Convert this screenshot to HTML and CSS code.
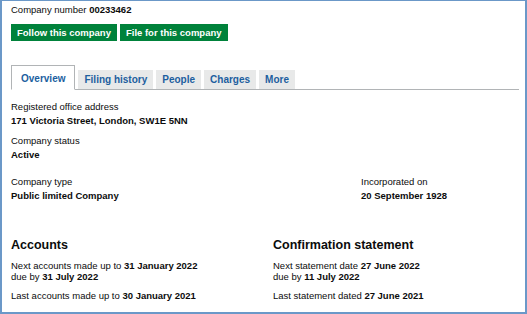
FILE: index.html
```html
<!DOCTYPE html>
<html lang="en">
<head>
  <meta charset="UTF-8">
  <meta name="viewport" content="width=device-width, initial-scale=1.0">
  <title>Company overview</title>
  <link rel="stylesheet" href="styles.css">
</head>
<body>
  <div class="frame">
    <p class="company-number">Company number <strong>00233462</strong></p>

    <div class="actions">
      <a class="button" href="#">Follow this company</a>
      <a class="button" href="#">File for this company</a>
    </div>

    <ul class="tabs">
      <li class="tab selected"><a href="#">Overview</a></li>
      <li class="tab"><a href="#">Filing history</a></li>
      <li class="tab"><a href="#">People</a></li>
      <li class="tab"><a href="#">Charges</a></li>
      <li class="tab"><a href="#">More</a></li>
    </ul>

    <dl class="details">
      <dt>Registered office address</dt>
      <dd>171 Victoria Street, London, SW1E 5NN</dd>
      <dt>Company status</dt>
      <dd>Active</dd>
    </dl>

    <div class="row-third">
      <dl class="details">
        <dt>Company type</dt>
        <dd>Public limited Company</dd>
      </dl>
      <dl class="details">
        <dt>Incorporated on</dt>
        <dd>20 September 1928</dd>
      </dl>
    </div>

    <div class="row-half">
      <div class="panel">
        <h2>Accounts</h2>
        <p>Next accounts made up to <strong>31 January 2022</strong><br>
          due by <strong>31 July 2022</strong></p>
        <p>Last accounts made up to <strong>30 January 2021</strong></p>
      </div>
      <div class="panel">
        <h2>Confirmation statement</h2>
        <p>Next statement date <strong>27 June 2022</strong><br>
          due by <strong>11 July 2022</strong></p>
        <p>Last statement dated <strong>27 June 2021</strong></p>
      </div>
    </div>
  </div>
</body>
</html>
```

FILE: styles.css
```css
body {
  margin: 0;
  background: #ffffff;
  font-family: "Liberation Sans", Arial, sans-serif;
  font-size: 9.5px;
  color: #0b0c0c;
}

.frame {
  box-sizing: border-box;
  height: 314px;
  border: 2px solid #6b98c8;
  border-top-width: 1px;
  padding: 3px 6px 0 9px;
}

.company-number {
  margin: 0;
  line-height: 12px;
}

.actions {
  display: flex;
  gap: 3px;
  margin-top: 8px;
}

.button {
  display: block;
  height: 17px;
  line-height: 17px;
  padding: 0 6px;
  background: #00823b;
  color: #ffffff;
  text-decoration: none;
  font-size: 9.5px;
  font-weight: bold;
}

.tabs {
  display: flex;
  align-items: flex-end;
  gap: 3px;
  list-style: none;
  margin: 24px 0 0;
  padding: 0;
  border-bottom: 1px solid #b1b4b6;
}

.tab a {
  display: block;
  height: 19px;
  line-height: 19px;
  padding: 0 6px;
  background: #e8e9e9;
  color: #1d5f9f;
  font-size: 10px;
  font-weight: bold;
  text-decoration: none;
}

.tab.selected a {
  height: 23px;
  line-height: 25px;
  padding: 0 9px;
  margin-bottom: -1px;
  background: #ffffff;
  border: 1px solid #b1b4b6;
  border-bottom: 1px solid #ffffff;
}

.details {
  margin: 10px 0 0;
}

.details dt {
  line-height: 14px;
}

.details dd {
  margin: 0 0 6px;
  line-height: 14px;
  font-weight: bold;
}

.row-third {
  display: grid;
  grid-template-columns: 350px 1fr;
  margin-top: 13px;
}

.row-third .details {
  margin: 0;
}

.row-half {
  display: grid;
  grid-template-columns: 1fr 1fr;
  column-gap: 16px;
  margin-top: 28px;
}

.panel h2 {
  margin: 0 0 7px;
  font-size: 12.5px;
  line-height: 16px;
}

.panel p {
  margin: 0 0 8px;
  line-height: 11px;
}
```
